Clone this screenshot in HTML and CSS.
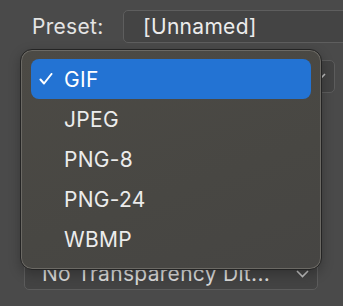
FILE: index.html
```html
<!DOCTYPE html>
<html lang="en">
<head>
    <meta charset="UTF-8">
    <title>Export Preset</title>
    <link rel="stylesheet" href="styles.css">
</head>
<body>

    <div class="panel">
        <div class="row preset-row">
            <span class="label">Preset:</span>
            <div class="field">[Unnamed]</div>
        </div>

        <div class="row format-row">
            <div class="select format-select">
                <span class="select-text"></span>
                <svg class="chevron" width="13" height="8" viewBox="0 0 13 8"><path d="M1 1 L6.5 6.5 L12 1" fill="none" stroke="#bdbdbd" stroke-width="1.6"/></svg>
            </div>
        </div>

        <div class="row dither-row">
            <div class="select dither-select">
                <span class="select-text">No Transparency Dit...</span>
                <svg class="chevron" width="13" height="8" viewBox="0 0 13 8"><path d="M1 1 L6.5 6.5 L12 1" fill="none" stroke="#bdbdbd" stroke-width="1.6"/></svg>
            </div>
        </div>
    </div>

    <ul class="menu">
        <li class="menu-item selected">
            <span class="check">
                <svg width="14" height="12" viewBox="0 0 14 12"><path d="M1.5 6.5 L5 10.5 L12.5 1" fill="none" stroke="#ffffff" stroke-width="2" stroke-linecap="round" stroke-linejoin="round"/></svg>
            </span>
            GIF
        </li>
        <li class="menu-item">JPEG</li>
        <li class="menu-item">PNG-8</li>
        <li class="menu-item">PNG-24</li>
        <li class="menu-item">WBMP</li>
    </ul>

</body>
</html>
```

FILE: styles.css
```css
body {
    font-family: Inter, "Noto Sans", sans-serif;
    background-color: #4a4a4a;
    color: #e6e6e6;
    margin: 0;
    padding: 0;
    width: 343px;
    height: 306px;
    overflow: hidden;
    position: relative;
    letter-spacing: 0.3px;
}

.panel {
    display: flex;
    flex-direction: column;
    padding-top: 10px;
}

.row {
    display: flex;
    align-items: center;
}

.preset-row {
    height: 33px;
}

.label {
    width: 123px;
    padding-left: 32px;
    box-sizing: border-box;
    font-size: 21px;
    color: #e4e4e4;
}

.field {
    flex: 1;
    height: 33px;
    margin-right: -20px;
    box-sizing: border-box;
    border: 1px solid #5e5e5e;
    border-radius: 5px;
    background-color: #444444;
    padding-left: 19px;
    display: flex;
    align-items: center;
    font-size: 21px;
    color: #ececec;
    white-space: nowrap;
    overflow: hidden;
}

.select {
    display: flex;
    align-items: center;
    justify-content: space-between;
    box-sizing: border-box;
    height: 33px;
    border: 1px solid #5c5c5c;
    border-radius: 5px;
    background-color: #434343;
    font-size: 21px;
    color: #d8d8d8;
    white-space: nowrap;
}

.format-row {
    margin-top: 17px;
    padding-left: 24px;
    padding-right: 8px;
}

.format-select {
    flex: 1;
    padding: 0 8px 0 18px;
}

.dither-row {
    margin-top: 164px;
    padding-left: 24px;
    padding-right: 25px;
}

.dither-select {
    flex: 1;
    padding: 0 8px 0 17px;
}

.chevron {
    display: block;
}

.menu {
    position: absolute;
    left: 20px;
    top: 49px;
    width: 302px;
    height: 221px;
    box-sizing: border-box;
    margin: 0;
    padding: 9px 10px;
    list-style: none;
    background: linear-gradient(160deg, #4c4a45 0%, #484743 60%, #464543 100%);
    border: 1px solid #242424;
    border-radius: 12px;
    box-shadow: inset 0 0 0 1px #6b6964, 0 4px 12px rgba(0, 0, 0, 0.25);
}

.menu-item {
    position: relative;
    height: 40px;
    display: flex;
    align-items: center;
    padding-left: 33px;
    font-size: 21px;
    color: #ececec;
}

.menu-item.selected {
    background-color: #2373d3;
    border-radius: 8px;
    color: #ffffff;
}

.check {
    position: absolute;
    left: 8px;
    top: 14px;
    display: flex;
}
```
